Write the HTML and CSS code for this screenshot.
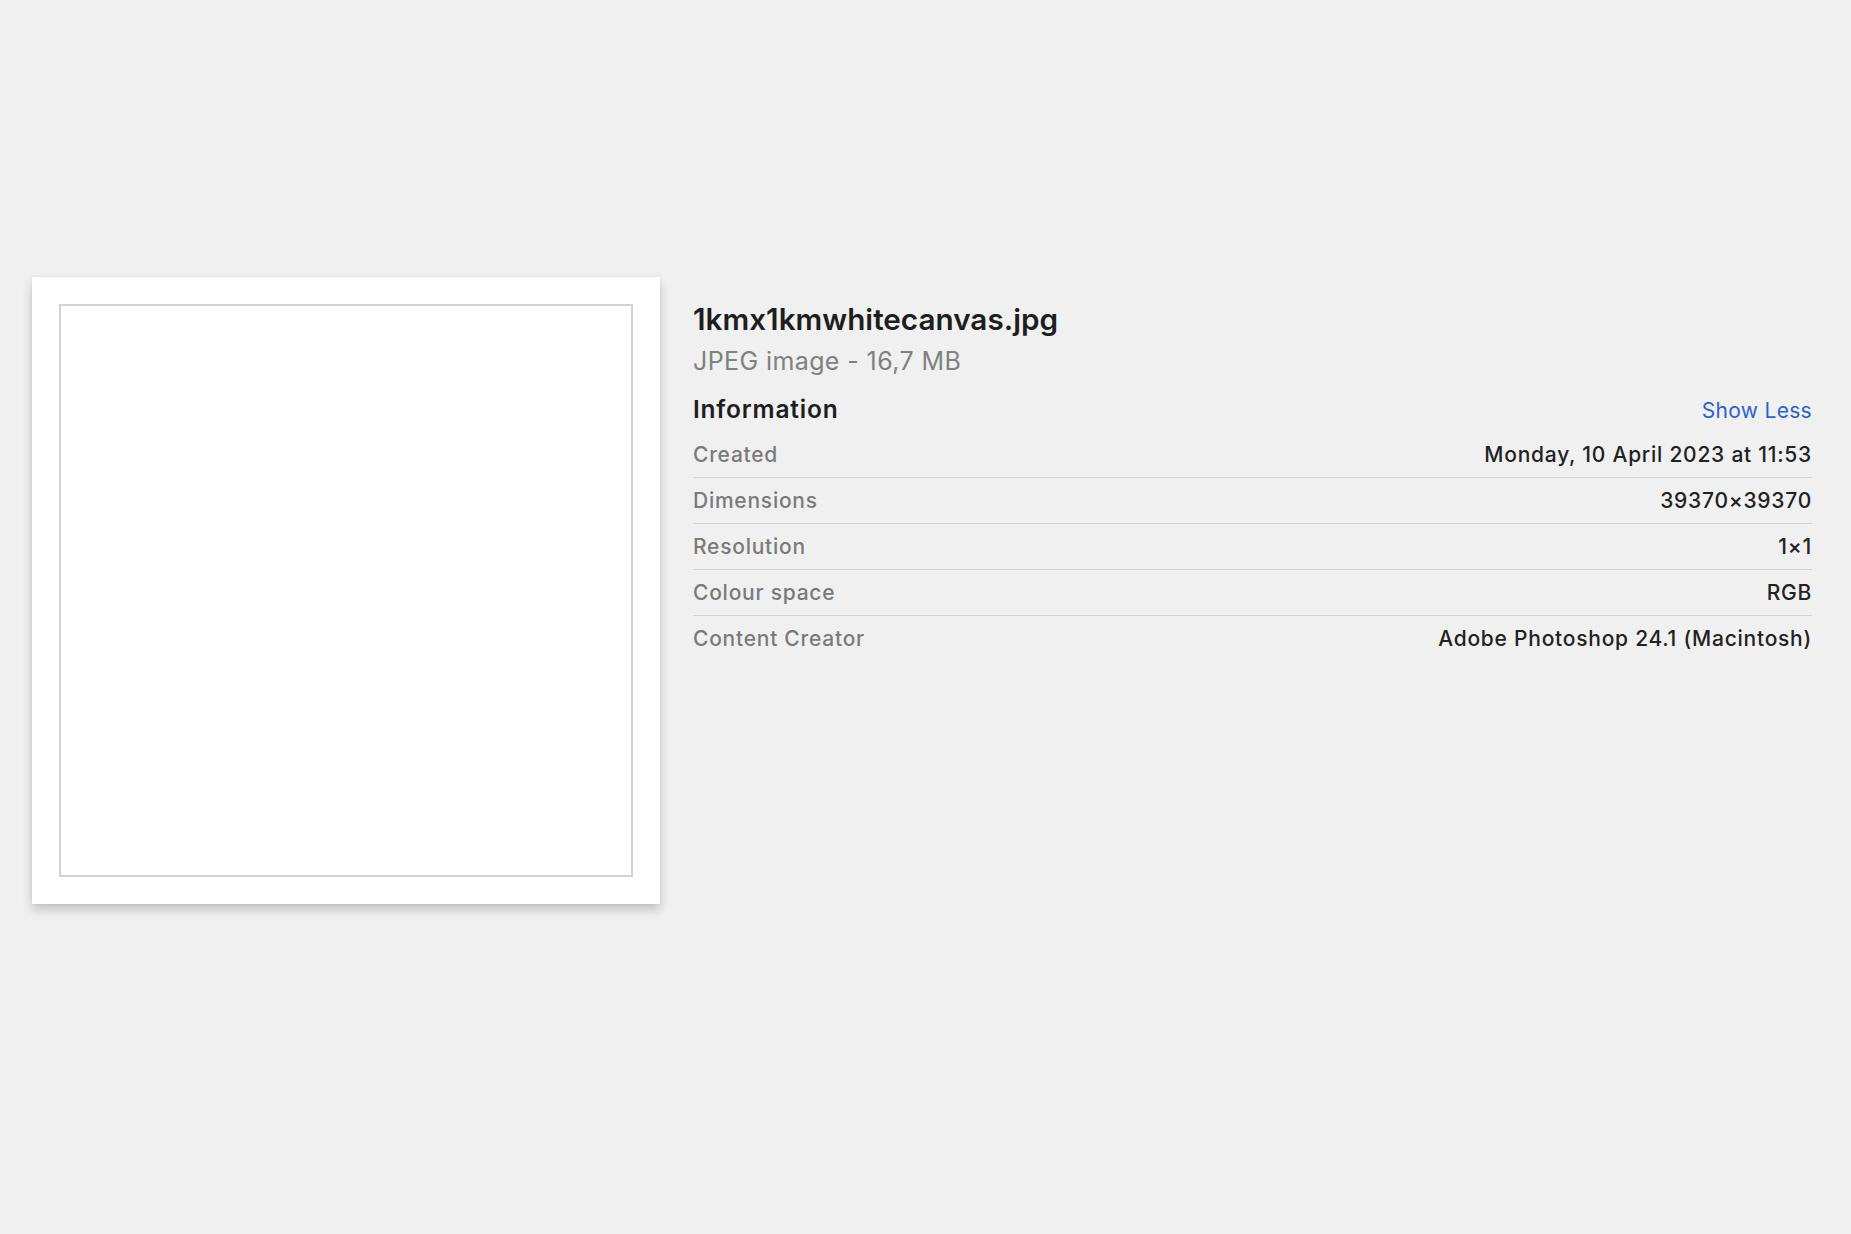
FILE: index.html
```html
<!DOCTYPE html>
<html>
<head>
<meta charset="utf-8">
<link rel="stylesheet" href="styles.css">
</head>
<body>
<div class="page">
  <div class="card">
    <div class="canvas"></div>
  </div>
  <div class="info">
    <div class="title">1kmx1kmwhitecanvas.jpg</div>
    <div class="subtitle">JPEG image - 16,7 MB</div>
    <div class="section-head">
      <span class="section-title">Information</span>
      <span class="link">Show Less</span>
    </div>
    <div class="rows">
      <div class="row"><span class="label">Created</span><span class="value">Monday, 10 April 2023 at 11:53</span></div>
      <div class="row"><span class="label">Dimensions</span><span class="value">39370×39370</span></div>
      <div class="row"><span class="label">Resolution</span><span class="value">1×1</span></div>
      <div class="row"><span class="label">Colour space</span><span class="value">RGB</span></div>
      <div class="row"><span class="label">Content Creator</span><span class="value">Adobe Photoshop 24.1 (Macintosh)</span></div>
    </div>
  </div>
</div>
</body>
</html>
```

FILE: styles.css
```css
html, body {
  margin: 0;
  padding: 0;
  background: #f0f0f0;
  font-family: Inter, "Noto Sans", sans-serif;
}
.page {
  display: flex;
  align-items: flex-start;
  padding: 277px 0 0 32px;
  height: 1234px;
  box-sizing: border-box;
}
.card {
  width: 628px;
  height: 627px;
  box-sizing: border-box;
  padding: 27px;
  background: #ffffff;
  box-shadow: 0 6px 10px rgba(0,0,0,0.18), 0 0 4px rgba(0,0,0,0.06);
  flex: none;
}
.canvas {
  width: 100%;
  height: 100%;
  box-sizing: border-box;
  border: 2px solid #d2d2d2;
  background: #fff;
}
.info {
  margin-left: 33px;
  width: 1119px;
  padding-top: 23.5px;
}
.title {
  font-size: 29.7px;
  line-height: 36px;
  font-weight: 600;
  color: #1e1e1e;
}
.subtitle {
  margin-top: 9.5px;
  font-size: 25px;
  line-height: 30px;
  letter-spacing: 0.4px;
  color: #808080;
}
.section-head {
  margin-top: 17.5px;
  display: flex;
  justify-content: space-between;
  align-items: baseline;
}
.section-title {
  font-size: 24.5px;
  line-height: 30px;
  font-weight: 600;
  letter-spacing: 0.8px;
  color: #1e1e1e;
}
.link {
  font-size: 21px;
  line-height: 30px;
  letter-spacing: 0.3px;
  color: #2a62d0;
}
.rows {
  margin-top: 6px;
}
.row {
  display: flex;
  justify-content: space-between;
  height: 45px;
  line-height: 45px;
  font-size: 21px;
  letter-spacing: 0.75px;
  border-bottom: 1.5px solid #d4d4d4;
}
.row:last-child {
  border-bottom: none;
}
.label {
  color: #7a7a7a;
  font-weight: 500;
}
.value {
  color: #222222;
  font-weight: 500;
}
```
